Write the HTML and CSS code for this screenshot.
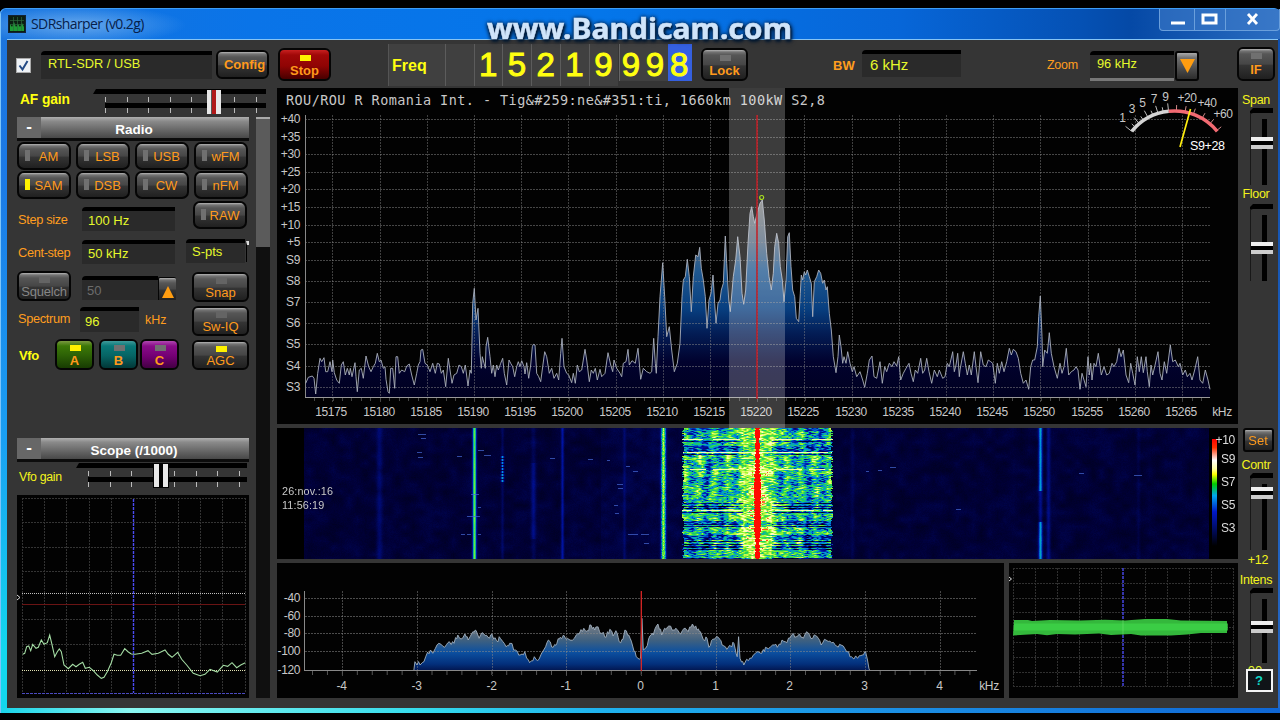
FILE: index.html
```html
<!DOCTYPE html>
<html lang="en">
<head>
    <meta charset="UTF-8">
    <meta name="viewport" content="width=device-width, initial-scale=1.0">
    <title>SDRsharper (v0.2g)</title>
    <link rel="stylesheet" href="styles.css">
</head>
<body>
<div class="window">
    <header class="titlebar">
        <svg class="app-icon" width="18" height="18" viewBox="0 0 18 18">
            <rect x="0.5" y="0.5" width="17" height="17" fill="#0b1d12" stroke="#123"/>
            <path d="M2 13V9l2 3 2-5 2 5 2-3 2 3 2-4 2 4v4H2z" fill="#1d9a35"/>
            <path d="M5.5 2v14M9.5 2v14M13.5 2v14M2 5.5h14M2 9.5h14" stroke="#2c6a3c" stroke-width="0.7"/>
        </svg>
        <span class="app-title">SDRsharper (v0.2g)</span>
        <div class="win-buttons">
            <span class="win-min"><svg width="34" height="22"><path d="M11 14h14" stroke="#fff" stroke-width="3"/></svg></span>
            <span class="win-max"><svg width="30" height="22"><rect x="8" y="6" width="13" height="8" fill="none" stroke="#fff" stroke-width="3"/></svg></span>
            <span class="win-close"><svg width="53" height="22"><path d="M22 5l9 10M31 5l-9 10" stroke="#fff" stroke-width="2.8"/></svg></span>
        </div>
        <svg class="watermark" width="330" height="44"><text x="12" y="30" textLength="305" lengthAdjust="spacingAndGlyphs">www.Bandicam.com</text></svg>
    </header>
    <div class="client">
        <!-- Toolbar -->
        <div class="toolbar">
            <span class="checkbox"><svg width="15" height="15"><path d="M3.5 7.5l3 4 5-8.500" fill="none" stroke="#234a86" stroke-width="2"/></svg></span>
            <div class="field device">RTL-SDR / USB</div>
            <button class="btn config">Config</button>
            <button class="btn led-top stop"><i class="led on"></i>Stop</button>
            <div class="freq">
                <span class="freq-label">Freq</span>
                <span class="digit"></span>
                <span class="digit">1</span>
                <span class="digit">5</span>
                <span class="digit">2</span>
                <span class="digit">1</span>
                <span class="digit">9</span>
                <span class="digit hz first">9</span>
                <span class="digit hz">9</span>
                <span class="digit hz active">8</span>
            </div>
            <button class="btn led-top lock"><i class="led"></i>Lock</button>
            <span class="bw-label">BW</span>
            <div class="field bw">6 kHz</div>
            <span class="zoom-label">Zoom</span>
            <div class="field zoom">96 kHz</div>
            <button class="btn drop"><svg width="15" height="14"><path d="M0 0h15l-7.500 14z" fill="#ff9d10"/></svg></button>
            <button class="btn led-top if"><i class="led"></i>IF</button>
        </div>
        <div class="main">
            <!-- Left side: gain + accordion panels -->
            <aside class="left">
                <div class="af-gain">
                    <span class="gain-label">AF gain</span>
                    <svg id="afSlider" width="173" height="28"></svg>
                </div>
                <div class="accordion">
                    <div class="panels">
                        <div class="panel-head"><b>-</b><span>Radio</span></div>
                        <div class="modes">
                            <button class="btn mode"><i class="led side"></i>AM</button>
                            <button class="btn mode"><i class="led side"></i>LSB</button>
                            <button class="btn mode"><i class="led side"></i>USB</button>
                            <button class="btn mode"><i class="led side"></i>wFM</button>
                            <button class="btn mode"><i class="led side on"></i>SAM</button>
                            <button class="btn mode"><i class="led side"></i>DSB</button>
                            <button class="btn mode"><i class="led side"></i>CW</button>
                            <button class="btn mode"><i class="led side"></i>nFM</button>
                        </div>
                        <div class="settings">
                            <div class="settings-left">
                                <div class="row"><label>Step size</label><div class="field step">100 Hz</div></div>
                                <div class="row cent"><label>Cent-step</label><div class="field step">50 kHz</div></div>
                                <div class="row squelch-row">
                                    <button class="btn led-top squelch"><i class="led dim"></i>Squelch</button>
                                    <div class="field squelch-val">50</div>
                                    <button class="btn up"><svg width="12" height="12"><path d="M0 12h12L6 0z" fill="#ff9d10"/></svg></button>
                                </div>
                                <div class="row spectrum-row"><label>Spectrum</label><div class="field spec-val">96</div><span class="unit">kHz</span></div>
                                <div class="row vfo-row">
                                    <label class="vfo-label">Vfo</label>
                                    <button class="btn led-top vfo vfo-a"><i class="led on"></i>A</button>
                                    <button class="btn led-top vfo vfo-b"><i class="led"></i>B</button>
                                    <button class="btn led-top vfo vfo-c"><i class="led"></i>C</button>
                                </div>
                            </div>
                            <div class="settings-right">
                                <button class="btn mode raw"><i class="led side"></i>RAW</button>
                                <div class="spts-row"><div class="field spts">S-pts</div><i class="spts-edge"></i></div>
                                <button class="btn led-top wide"><i class="led dim"></i>Snap</button>
                                <button class="btn led-top wide"><i class="led dim"></i>Sw-IQ</button>
                                <button class="btn led-top wide"><i class="led on"></i>AGC</button>
                            </div>
                        </div>
                        <div class="panel-head"><b>-</b><span>Scope (/1000)</span></div>
                        <div class="vfo-gain">
                            <span class="vfo-gain-label">Vfo gain</span>
                            <svg id="vfoSlider" width="171" height="28"></svg>
                        </div>
                        <svg id="scope" class="plot" width="232" height="203" viewBox="17 495 232 203"></svg>
                    </div>
                    <div class="scrollbar"><div class="scroll-thumb"></div></div>
                </div>
            </aside>

            <!-- Displays -->
            <section class="displays">
                <svg id="spectrum" class="plot" width="961" height="336" viewBox="277 88 961 336"></svg>
                <div class="waterfall">
                    <canvas id="waterfall" width="961" height="131"></canvas>
                    <div class="stamp">26:nov.:16<br>11:56:19</div>
                    <div class="legend"><span>+10</span><span>S9</span><span>S7</span><span>S5</span><span>S3</span></div>
                </div>
                <div class="bottom">
                    <svg id="afSpectrum" class="plot" width="727" height="135" viewBox="277 563 727 135"></svg>
                    <svg id="envelope" class="plot" width="229" height="135" viewBox="1009 563 229 135"></svg>
                </div>
            </section>

            <!-- Right side sliders -->
            <aside class="right">
                <span class="vlabel">Span</span>
                <svg class="vslider" data-thumb="29" width="24" height="77"></svg>
                <span class="vlabel">Floor</span>
                <svg class="vslider" data-thumb="38" width="24" height="77"></svg>
                <button class="btn set">Set</button>
                <span class="vlabel contr">Contr</span>
                <svg class="vslider" data-thumb="14" width="24" height="77"></svg>
                <span class="vlabel value">+12</span>
                <span class="vlabel intens">Intens</span>
                <svg class="vslider" data-thumb="33" width="24" height="75"></svg>
                <span class="clipped">00</span>
                <button class="help">?</button>
            </aside>
        </div>
    </div>
</div>
<script src="script.js"></script>
</body>
</html>
```

FILE: styles.css
```css
* {
    box-sizing: border-box;
}
body {
    margin: 0;
    width: 1280px;
    height: 720px;
    overflow: hidden;
    background: #000;
    font-family: "Liberation Sans", Arial, sans-serif;
    font-size: 13px;
    color: #ff9d1e;
}
svg, canvas {
    display: block;
}
button {
    font-family: inherit;
    margin: 0;
    padding: 0;
}
.window {
    margin-top: 8px;
    height: 705px;
    padding: 0 2px 5px 7px;
    border-top: 1px solid #3d9cf5;
    border-radius: 6px 6px 0 0;
    background:
        linear-gradient(90deg, #18d4ea 0, #8af6f0 130px, #35dcec 420px, #1fb2ee 600px, #1b8fe4 900px, #0f66d4 1280px) 0 100% / 100% 5px no-repeat,
        linear-gradient(180deg, #1c74dc 0, #1b7ae6 170px, #1a9ff2 430px, #12d6ee 640px) 0 0 / 7px 100% no-repeat,
        linear-gradient(180deg, #0f4fae, #2668c4) 100% 0 / 2px 100% no-repeat,
        #0b62d0;
    box-shadow: inset 1px 0 #7cc4fa;
}

/* Title bar */
.titlebar {
    position: relative;
    height: 30px;
    margin: 0 -2px 0 -6px;
    padding-left: 7px;
    display: flex;
    align-items: flex-start;
    background:
        radial-gradient(ellipse 110px 20px at 75px 16px, rgba(130, 185, 240, 0.75), rgba(130, 185, 240, 0) 100%),
        linear-gradient(90deg, #1673de 0, #0a74e8 250px, #0476ea 600px, #0766d8 900px, #0551b4 1080px, #0549a6 1130px, #2a6cc0 1275px);
    border-radius: 5px 5px 0 0;
}
.app-icon {
    margin-top: 6px;
}
.app-title {
    margin: 6px 0 0 5px;
    font: 14px "Open Sans", "Noto Sans", sans-serif;
    line-height: 18px;
    letter-spacing: -0.6px;
    color: #06204a;
}
.win-buttons {
    margin-left: auto;
    margin-right: 0;
    display: flex;
    height: 22px;
    border: 1px solid #6a9fdc;
    border-top: 0;
    border-radius: 0 0 4px 4px;
    background: rgba(70, 130, 205, 0.5);
}
.win-buttons span + span {
    border-left: 1px solid #6a9fdc;
}
.watermark {
    position: absolute;
    left: 474px;
    top: 0;
}
.watermark text {
    font: bold 28px "Noto Sans", "Open Sans", sans-serif;
    fill: #cfe4fa;
    stroke: #cfe4fa;
    stroke-width: 0.5px;
    filter: drop-shadow(0 0 2px #001c40) drop-shadow(1px 2px 1px #001428);
}

/* Client area */
.client {
    height: 669px;
    background: #353535;
    border-top: 1px solid #86c4f4;
}
.toolbar {
    height: 48px;
    padding-left: 9px;
    display: flex;
    align-items: flex-start;
}
.main {
    display: flex;
    height: 610px;
}
.field {
    background: #2a2a2a;
    border-top: 4px solid #000;
    border-radius: 4px 0 0 0;
    color: #e6f92c;
    font-size: 13px;
    white-space: nowrap;
    flex: none;
}
.btn {
    position: relative;
    flex: none;
    border: 2px solid #050505;
    border-radius: 6px;
    background: linear-gradient(180deg, #b5b5b5 0, #747474 2px, #565656 5px, #464646 50%, #343434 55%, #202020 100%);
    color: #ff9a1c;
    font-size: 13px;
    display: flex;
    align-items: center;
    justify-content: center;
    white-space: nowrap;
}
.led-top {
    padding-top: 11px;
}
.led {
    position: absolute;
    left: 50%;
    top: 4px;
    width: 11px;
    height: 6px;
    margin-left: -5px;
    background: #707070;
}
.led.side {
    left: 6px;
    top: 6px;
    width: 5px;
    height: 11px;
    margin-left: 0;
}
.led.dim {
    background: #646464;
}
.led.on {
    background: #fff200;
}

/* Toolbar items */
.checkbox {
    width: 15px;
    height: 15px;
    margin-top: 18px;
    background: #eef2f6;
    border: 1px solid #aaa;
}
.checkbox svg {
    margin: -1px;
}
.device {
    width: 171px;
    height: 28px;
    margin: 11px 0 0 10px;
    padding-left: 7px;
    line-height: 18px;
    font-size: 12.8px;
}
.config {
    width: 53px;
    height: 29px;
    margin: 10px 0 0 4px;
    padding-left: 4px;
    font-weight: bold;
    font-size: 13px;
}
.stop {
    width: 53px;
    height: 33px;
    margin: 8px 0 0 9px;
    font-weight: bold;
    font-size: 13px;
    background: linear-gradient(180deg, #c82020 0, #a00808 5px, #900404 55%, #480000 100%);
}
.stop .led, .lock .led {
    top: 5px;
}
.freq {
    display: flex;
    align-items: flex-start;
    width: 304px;
    height: 42px;
    margin: 4px 0 0 57px;
    border-left: 1px solid #555;
}
.freq-label {
    width: 56px;
    height: 42px;
    padding-left: 3px;
    background: #404040;
    font-size: 16px;
    font-weight: bold;
    line-height: 43px;
    color: #ffff10;
}
.digit {
    width: 28.9px;
    height: 42px;
    border-left: 1px solid #5c5c5c;
    background: #404040;
    font-size: 33px;
    line-height: 42px;
    text-align: center;
    color: #ffff10;
    -webkit-text-stroke: 1px #ffff10;
    text-indent: -1px;
}
.digit.hz {
    width: 24.500px;
    height: 37px;
    border-left: 0;
}
.digit.hz.first {
    border-left: 1px solid #666;
    margin-left: 1px;
}
.digit.active {
    background: #3560e0;
}
.lock {
    width: 47px;
    height: 33px;
    margin: 8px 0 0 9px;
    font-weight: bold;
}
.bw-label {
    margin: 18px 0 0 85px;
    font-weight: bold;
    font-size: 13px;
    width: 23px;
}
.bw {
    width: 99px;
    height: 27px;
    margin: 10px 0 0 6px;
    padding-left: 8px;
    font-size: 15px;
    line-height: 21px;
}
.zoom-label {
    width: 33px;
    margin: 18px 0 0 86px;
    font-size: 12.5px;
    letter-spacing: -0.3px;
}
.zoom {
    width: 84px;
    height: 30px;
    margin: 11px 0 0 10px;
    padding-left: 7px;
    line-height: 17px;
    font-size: 12.8px;
    border-bottom: 3px solid #777;
}
.drop {
    width: 24px;
    height: 30px;
    margin: 11px 0 0 1px;
    border-radius: 3px;
    background: linear-gradient(180deg, #aaa 0, #707070 5px, #4c4c4c 60%, #2c2c2c 100%);
}
.if {
    width: 38px;
    height: 34px;
    margin: 7px 0 0 38px;
    font-weight: bold;
}

/* Left column */
.left {
    width: 270px;
    flex: none;
    padding-left: 10px;
}
.af-gain {
    height: 29px;
    display: flex;
}
.gain-label {
    width: 76px;
    padding: 4px 0 0 3px;
    font-weight: bold;
    font-size: 13.800px;
    letter-spacing: -0.1px;
    color: #ffff10;
}
.accordion {
    display: flex;
    width: 259px;
}
.panels {
    width: 232px;
}
.panel-head {
    display: flex;
    height: 24px;
    align-items: stretch;
    background: linear-gradient(180deg, #b0b0b0 0, #8a8a8a 20%, #606060 70%, #484848 100%);
    border-bottom: 3px solid #0c0c0c;
    color: #fff;
    font-weight: bold;
    font-size: 13.500px;
}
.panel-head b {
    width: 24px;
    background: #676767;
    text-align: center;
    line-height: 20px;
    font-size: 17px;
}
.panel-head span {
    flex: 1;
    text-align: center;
    padding-right: 22px;
    line-height: 26px;
}
.modes {
    display: grid;
    grid-template-columns: repeat(4, 54px);
    column-gap: 5px;
    row-gap: 1px;
    padding-top: 1px;
}
.mode {
    height: 28px;
    padding-left: 9px;
    border-radius: 7px;
}
.settings {
    display: flex;
    justify-content: space-between;
    height: 239px;
}
.settings-left {
    width: 165px;
    padding-top: 8px;
}
.row {
    display: flex;
    height: 33px;
    align-items: flex-start;
}
.row label {
    width: 65px;
    padding: 5px 0 0 1px;
    font-size: 12.800px;
    letter-spacing: -0.35px;
}
.step {
    width: 93px;
    height: 24px;
    padding-left: 6px;
    line-height: 20px;
}
.squelch-row {
    height: 34px;
}
.squelch {
    width: 54px;
    height: 30px;
    margin-top: -2px;
    color: #868686;
    letter-spacing: -0.2px;
}
.squelch-val {
    width: 76px;
    height: 24px;
    margin: 3px 0 0 11px;
    padding-left: 5px;
    line-height: 21px;
    color: #6c6c6c;
}
.up {
    width: 18px;
    height: 23px;
    margin-top: 4px;
    border-width: 1px 0 0 1px;
    border-radius: 2px 2px 0 0;
    padding-top: 6px;
}
.spectrum-row label {
    width: 63px;
    padding-top: 4px;
}
.spec-val {
    width: 59px;
    height: 25px;
    margin-top: 0;
    padding-left: 5px;
    line-height: 21px;
}
.unit {
    margin: 6px 0 0 6px;
    font-size: 12.500px;
}
.vfo-row .vfo-label {
    width: 38px;
    padding: 8px 0 0 2px;
    font-size: 13px;
    font-weight: bold;
    color: #ffff10;
}
.vfo {
    width: 39px;
    height: 31px;
    margin-top: -1px;
    font-weight: bold;
}
.vfo-a {
    background: linear-gradient(180deg, #7a9a40 0, #3c7808 5px, #2c6006 55%, #183c02 100%);
}
.vfo-b {
    margin-left: 5px;
    background: linear-gradient(180deg, #409a9a 0, #087878 5px, #066464 55%, #023838 100%);
}
.vfo-c {
    margin-left: 2px;
    background: linear-gradient(180deg, #b048b0 0, #880c88 5px, #740074 55%, #440044 100%);
}
.settings-right {
    width: 64px;
    padding-top: 2px;
    display: flex;
    flex-direction: column;
    align-items: flex-end;
}
.raw {
    width: 54px;
    margin-right: 2px;
}
.spts-row {
    display: flex;
    width: 63px;
    margin: 10px 0 9px;
}
.spts {
    width: 59px;
    height: 24px;
    padding-left: 6px;
    line-height: 18px;
}
.spts-edge {
    width: 3px;
    height: 21px;
    margin: 2px 0 0 1px;
    border-left: 1px solid #000;
    border-top: 4px solid #ddd;
}
.wide {
    width: 57px;
    height: 30px;
    margin-bottom: 4px;
}
.vfo-gain {
    display: flex;
    height: 33px;
}
.vfo-gain-label {
    width: 59px;
    padding: 8px 0 0 2px;
    font-size: 12.300px;
    letter-spacing: -0.3px;
    color: #f4f41c;
    white-space: nowrap;
}
.scrollbar {
    width: 14px;
    height: 581px;
    margin-left: 7px;
    background: #101010;
}
.scroll-thumb {
    height: 130px;
    background: #5b5b5b;
    border-top: 2px solid #aaa;
}

/* Displays */
.displays {
    width: 961px;
    flex: none;
    display: flex;
    flex-direction: column;
    gap: 4px;
}
.plot {
    background: #020202;
}
#spectrum {
    overflow: visible;
}
.plot text {
    font-size: 12px;
    letter-spacing: -0.4px;
    fill: #c8c8c8;
}
.plot .station {
    font-family: "DejaVu Sans Mono", monospace;
    font-size: 13.500px;
    letter-spacing: 0;
}
.plot .reading {
    font-size: 12.500px;
    fill: #fff;
}
.waterfall {
    position: relative;
    height: 131px;
}
.stamp {
    position: absolute;
    left: 5px;
    top: 57px;
    font-size: 10.800px;
    line-height: 13.500px;
    letter-spacing: 0.15px;
    color: #c8c8c8;
}
.legend {
    position: absolute;
    right: 3px;
    top: 2px;
    display: flex;
    flex-direction: column;
    font-size: 12px;
    line-height: 23px;
    letter-spacing: -0.3px;
    color: #dcdcdc;
    text-align: right;
}
.legend span:first-child {
    line-height: 20px;
    height: 18px;
}
.bottom {
    display: flex;
    gap: 5px;
}

/* Right column */
.right {
    width: 40px;
    display: flex;
    flex-direction: column;
    align-items: center;
}
.vlabel {
    height: 20px;
    line-height: 24px;
    font-size: 12.500px;
    letter-spacing: -0.3px;
    margin-right: 4px;
    color: #f4f41c;
}
.vslider {
    margin-left: 7px;
    flex: none;
}
.vslider + .vlabel {
    height: 19px;
    line-height: 19px;
}
.set {
    width: 31px;
    height: 24px;
    margin-top: 147px;
    border-radius: 3px;
}
.vlabel.contr {
    height: 21px;
    line-height: 27px;
}
.vlabel.value {
    margin-right: 0;
}
.vslider + .vlabel.value {
    line-height: 21px;
}
.vlabel.intens {
    height: 19px;
    line-height: 23px;
}
.clipped {
    height: 6px;
    margin-right: 6px;
    overflow: hidden;
    line-height: 15px;
    color: #e6f92c;
}
.help {
    width: 27px;
    height: 23px;
    margin-left: 2px;
    border: 2px solid #f4f4f4;
    background: #101418;
    color: #10d8c8;
    font-size: 13px;
    font-weight: bold;
}
```

FILE: script.js
```javascript
// small seeded generator so every load draws the same picture
let seed = 4711;
function rnd() {
    seed = (seed * 1664525 + 1013904223) >>> 0;
    return seed / 4294967296;
}

function line(x1, y1, x2, y2, color, extra = '') {
    return `<line x1="${x1}" y1="${y1}" x2="${x2}" y2="${y2}" stroke="${color}" ${extra}/>`;
}
function rect(x, y, w, h, color) {
    return `<rect x="${x}" y="${y}" width="${w}" height="${h}" fill="${color}"/>`;
}
function text(x, y, str, anchor = 'middle') {
    return `<text x="${x}" y="${y}" text-anchor="${anchor}">${str}</text>`;
}
// "x,y x,y" string -> array, scaled and shifted
function pts(str, ox, oy, sx, sy) {
    return str.trim().split(/\s+/).map(p => {
        const [x, y] = p.split(',').map(Number);
        return [ox + x / sx, oy + y / sy];
    });
}
function poly(list) {
    return list.map(p => p[0].toFixed(1) + ',' + p[1].toFixed(1)).join(' ');
}

// ---- horizontal sliders ----
function hSlider(id, thumb) {
    let s = '<path d="M0 6 L3 1 H174 V6 H3z" fill="#000"/>' + rect(12, 15, 162, 5, '#000');
    for (let i = 0; i < 8; i++) {
        const x = Math.round(12 + i * 21.5) + 0.5;
        s += line(x, 9, x, 14, '#bbb') + line(x, 20, x, 25, '#bbb');
    }
    document.getElementById(id).innerHTML = s + thumb;
}
hSlider('afSlider', rect(114, 2, 14, 24, '#e8e8e8') + rect(119, 2, 4, 24, '#b01818') + rect(118, 2, 1, 24, '#555'));
hSlider('vfoSlider', rect(77, 2, 16, 24, '#000') + rect(78, 2, 5, 23, '#e8e8e8') + rect(87, 2, 5, 23, '#e8e8e8'));

// ---- vertical sliders ----
document.querySelectorAll('.vslider').forEach(el => {
    const t = Number(el.dataset.thumb);
    el.innerHTML = '<path d="M0 6V3L3 0H23V5H3z" fill="#000"/>' + line(0.5, 5, 0.5, 77, '#181818') +
        rect(12, 11, 5, 66, '#000') +
        rect(1, t, 22, 12, '#000') + rect(1, t, 22, 4, '#eee') + rect(1, t + 8, 22, 4, '#ccc');
});

// ---- RF spectrum ----
const rfA = `107,880 115,862 127,858 132,865 137,912 143,850 150,805 155,815 162,803 167,845 173,845 180,815 186,845 188,810 193,848 200,870 208,880 214,825 220,815 226,855 232,835 238,855 241,835 246,860 255,818 258,860 262,905 268,840 274,835 280,865 288,798 296,830 303,845 310,830 316,820 322,790 328,815 333,810 340,835 345,830 348,868 354,905 358,910 362,835 368,835 374,895 378,800 383,800 388,850 395,840 404,845 410,828 418,822 425,855 433,885 440,850 445,825 450,815 453,780 458,778 465,820 472,825 480,845 488,820 496,850 502,820 508,822 514,850 520,840 527,890 535,805 540,840 546,880 552,855 560,850 567,825 574,830 580,850 586,825 594,888 600,840 604,850 608,640 613,595 618,690 624,655 630,790 634,835 637,800 642,820 646,835 648,770 653,742 660,800 665,850 670,825 675,860 680,825 685,840 692,820 698,805 703,850 710,885 717,810 722,820 728,830 734,860 740,830 745,815 750,830 755,812 762,830 765,852 770,818 776,865 782,825 787,770 790,763 795,765 800,850 806,860 812,875 818,830 824,785 830,800 838,850 845,835 852,865 860,850 866,870 872,790 876,745 882,830 890,850 896,855 905,878 910,850 916,880 922,825 928,845 935,840 945,778 950,810 958,875 964,840 970,850 976,835 982,870 990,838 995,860 1005,850 1014,788 1022,825 1028,845 1032,810 1040,835`;
const rfB = `0,850 5,860 10,820 18,815 24,778 28,825 36,812 46,820 54,775 62,868 70,835 80,845 90,850 95,845 101,745 106,820 109,850 114,740 120,620 128,518 134,620 140,740 148,710 155,780 163,845 172,820 180,760 186,620 190,570 196,560 202,508 208,560 214,665 220,560 227,495 234,500 239,472 244,535 250,570 256,620 261,715 267,630 273,610 279,555 284,640 288,700 294,640 300,630 304,600 310,580 316,438 320,520 326,630 331,665 340,560 347,510 353,440 360,500 366,610 371,643 377,600 384,460 390,370 395,350 400,380 404,400 410,375 420,340 427,330 433,390 440,490 447,560 454,600 460,550 464,470 470,430 476,460 481,530 487,570 492,635 498,570 503,440 508,428 513,530 518,600 524,620 529,685 536,695 541,610 544,555 548,570 553,545 557,555 562,540 568,560 574,580 578,680 583,575 590,560 596,540 602,550 608,580 613,570 618,600 622,590 628,670 634,720 640,800 648,848 654,800 658,735 663,770 668,820 672,800 678,820 683,785 690,820 697,845 702,830 710,860 720,845 728,870 734,892 742,850 748,810 756,798 762,860 770,865 780,815 787,880 794,830 800,845 808,820 816,830 822,815 830,828 836,800 842,870 850,850 858,835 867,820 873,850 880,875 886,840 893,850 902,805 908,850 914,840 920,805 927,845 935,880 943,840 952,860 958,840 968,865 975,860 982,820 988,830 998,785 1003,845 1008,825 1013,790 1018,860`;
const rfC = `0,840 10,785 16,820 22,855 28,825 34,855 43,785 48,830 54,878 62,785 70,825 78,830 85,810 92,815 98,820 106,880 112,820 118,850 125,815 132,845 140,815 148,775 154,795 160,778 168,785 175,805 182,850 190,880 198,870 206,898 212,830 218,810 224,810 232,770 236,680 241,618 246,740 248,830 254,780 262,790 268,728 274,790 282,830 292,865 300,820 306,850 312,830 319,775 326,855 334,845 342,840 348,830 354,840 360,898 366,850 372,870 378,890 384,800 388,855 392,820 396,870 402,820 408,830 415,790 424,855 432,830 440,855 448,850 456,820 462,830 470,815 477,775 483,800 490,780 498,855 506,878 512,820 518,850 525,885 532,800 538,845 544,800 550,848 558,800 562,845 568,890 573,825 578,855 584,830 594,785 600,850 606,870 613,815 620,850 631,765 638,815 646,810 655,830 660,820 668,855 676,840 682,860 690,850 696,870 704,840 713,800 720,870 728,880 736,840 744,870 750,898`;

function drawSpectrum() {
    const trace = [...pts(rfA, 270, 90, 3, 3), ...pts(rfB, 620, 90, 3, 3), ...pts(rfC, 960, 90, 3, 3)];
    const p = poly(trace);
    let s = `<defs><linearGradient id="rf" gradientUnits="userSpaceOnUse" x1="0" y1="200" x2="0" y2="397">
        <stop offset="0" stop-color="#80807e"/><stop offset="0.2" stop-color="#5a6c80"/>
        <stop offset="0.36" stop-color="#1f5890"/><stop offset="0.55" stop-color="#083f80"/>
        <stop offset="0.68" stop-color="#031c54"/><stop offset="0.82" stop-color="#01022e"/>
        <stop offset="1" stop-color="#000020"/></linearGradient></defs>`;
    s += `<polygon points="305,397 ${p} 1210,397" fill="url(#rf)"/>`;

    const ys = [119.5, 137.5, 154.5, 172.5, 189.5, 207.5, 225.5, 242.5, 260.5, 281.5, 302.5, 323.5, 344.5, 366.5, 387.5];
    const names = ['+40', '+35', '+30', '+25', '+20', '+15', '+10', '+5', 'S9', 'S8', 'S7', 'S6', 'S5', 'S4', 'S3'];
    ys.forEach((y, i) => {
        s += line(305, y, 1210, y, '#8a8a8a', 'stroke-opacity="0.5" stroke-dasharray="2 1"');
        s += text(300, y + 3.5, names[i], 'end');
    });
    for (let i = 0; i < 19; i++) {
        const x = Math.round(332.3 + i * 47.2) + 0.5;
        s += line(x, 115, x, 403, '#8a8a8a', 'stroke-opacity="0.45" stroke-dasharray="2 1"');
        s += text(x - 1.5, 416, 15175 + i * 5);
    }
    for (let i = 0; i < 96; i++) {
        const x = Math.round(313.7 + i * 9.44) + 0.5;
        if (x < 1210) s += line(x, 398, x, 401, '#444');
    }
    s += line(305.5, 115, 305.5, 398, '#888') + line(305, 397.5, 1210, 397.5, '#999');
    s += text(1222, 416, 'kHz');
    s += `<polyline points="${p}" fill="none" stroke="#aab0bc" stroke-width="0.9"/>`;
    s += '<text class="station" x="286" y="105" textLength="539">ROU/ROU R Romania Int. - Tig&amp;#259:ne&amp;#351:ti, 1660km 100kW S2,8</text>';

    // filter passband and tuned frequency
    s += '<rect x="729" y="88" width="56" height="340" fill="#fff" fill-opacity="0.23"/>';
    s += line(757, 115, 757, 399, '#c01c24', 'stroke-width="1.5"');
    s += '<circle cx="761.7" cy="197.500" r="2" fill="none" stroke="#a8e020" stroke-width="1.2"/>';

    document.getElementById('spectrum').innerHTML = s + meter();
}

// S-meter in the top right corner
function meter() {
    const cx = 1174.5, cy = 166, r = 55;
    const at = (deg, rad) => [cx + rad * Math.sin(deg * Math.PI / 180), cy - rad * Math.cos(deg * Math.PI / 180)];
    const arc = (a, b, color) => {
        const p1 = at(a, r), p2 = at(b, r);
        return `<path d="M${p1} A${r} ${r} 0 0 1 ${p2}" fill="none" stroke="${color}" stroke-width="3.5"/>`;
    };
    let s = '';
    for (let i = 0; i < 9; i++) {
        const a = -51 + i * 5.6, o = at(a, i % 2 ? 60 : 63), n = at(a, 55);
        s += line(n[0], n[1], o[0], o[1], '#bbb');
    }
    [2, 11, 20, 30, 40, 50].forEach(a => {
        const o = at(a, 61), n = at(a, 55);
        s += line(n[0], n[1], o[0], o[1], '#c88');
    });
    s += arc(-51, -6, '#d4d4d4') + arc(-6, 51, '#f26a72');
    s += line(1190.5, 109, 1180, 147, '#ffee10', 'stroke-width="1.7"');
    [[1122.5, 122, '1'], [1132, 113, '3'], [1142.5, 107, '5'], [1154, 103, '7'], [1165.5, 101, '9'],
        [1187, 102, '+20'], [1207, 107, '+40'], [1223, 118, '+60']].forEach(l => s += text(...l));
    return s + '<text class="reading" x="1190" y="150">S9+28</text>';
}
drawSpectrum();

// ---- waterfall ----
const ramp = [[0, 0, 0, 0], [0.12, 0, 0, 56], [0.32, 0, 20, 170], [0.46, 0, 150, 220], [0.58, 30, 210, 90],
    [0.7, 150, 245, 40], [0.8, 235, 250, 110], [0.88, 255, 255, 220], [0.94, 255, 90, 30], [1, 255, 10, 0]];
function color(v) {
    v = Math.max(0, Math.min(1, v));
    for (let i = 1; i < ramp.length; i++) {
        if (v <= ramp[i][0]) {
            const a = ramp[i - 1], b = ramp[i], t = (v - a[0]) / (b[0] - a[0]);
            return [1, 2, 3].map(k => a[k] + (b[k] - a[k]) * t);
        }
    }
    return [255, 10, 0];
}
function noiseGrid(rows, cols) {
    return Array.from({length: rows}, () => Array.from({length: cols}, () => rnd()));
}
// bilinear lookup
function sample(grid, y, x) {
    const y0 = Math.floor(y), x0 = Math.floor(x), fy = y - y0, fx = x - x0;
    const a = grid[y0][x0] * (1 - fx) + grid[y0][x0 + 1] * fx;
    const b = grid[y0 + 1][x0] * (1 - fx) + grid[y0 + 1][x0 + 1] * fx;
    return a * (1 - fy) + b * fy;
}
function drawWaterfall() {
    const ctx = document.getElementById('waterfall').getContext('2d');
    const W = 961, H = 131, img = ctx.createImageData(W, H);
    const coarse = noiseGrid(24, 130);
    const blob = noiseGrid(40, 30);
    const fine = noiseGrid(132, 500);
    // [x, width, level]
    const carriers = [[379, 3, 0.09], [474, 1.9, 0.53], [502, 1.5, 0.07], [533, 2.5, 0.13], [562, 1.5, 0.18],
        [624, 1.5, 0.07], [663, 2.3, 0.6], [852, 2, 0.04], [1040, 2, 0.36], [1048, 2, 0.13], [1138, 2, 0.04]];
    for (let y = 0; y < H; y++) {
        const rowKind = rnd();
        // gaps between words are dark, clicks are thin bright lines
        const dark = rowKind < 0.09 ? 0.3 : (y > 17 && y < 24) || (y > 92 && y < 96) || (y > 106 && y < 112) ? 0.17 : 0;
        const click = rowKind > 0.93;
        const redHalf = 1.7 + rnd() * 1.3 + (y > 45 && y < 110 ? 0.9 : 0);
        for (let x = 0; x < W; x++) {
            const px = x + 277;
            let v = 0;
            if (px >= 304 && px < 1210) {
                v = 0.075 + sample(coarse, y / 7, x / 8) * 0.06 + rnd() * 0.02;
                if (px > 600 && px < 683) v += 0.02;
                for (const c of carriers) {
                    const d = Math.abs(px - c[0]) / c[1];
                    if (d < 3) {
                        let k = c[2];
                        if (c[0] === 663) k *= 0.8 + 0.3 * rnd();
                        if (c[0] === 1040 && y > 62 && y < 94) k *= 0.4;
                        if (c[0] === 502 && y > 27 && y < 55 && y % 3) k = 0.36;
                        if (c[0] === 533 && (y < 35 || y > 110)) k *= 0.5;
                        v += k * Math.exp(-d * d);
                    }
                }
                const off = Math.abs(px - 757);
                const edge = 73 + fine[y][3] * 3;
                if (off < edge) {
                    const g = sample(fine, y, x / 2.5);
                    v = 0.2 + g * 0.4 + sample(blob, y / 5, off / 6) * 0.26 - dark * (off > 14 ? 1 : 0.3);
                    v += 0.07 * Math.cos(off / 14.5 * Math.PI * 2) * (off > 12 ? 1 : 0);
                    v += 0.24 * Math.exp(-off * off / 330);
                    if (click && sample(fine, y, off / 12) > 0.42) v = 0.82 + g * 0.05;
                    v = Math.min(v, off < 12 && g > 0.86 ? 0.95 : 0.86);
                    if (off < redHalf) v = 1;
                }
            }
            const rgb = color(v), i = (y * W + x) * 4;
            img.data[i] = rgb[0];
            img.data[i + 1] = rgb[1];
            img.data[i + 2] = rgb[2];
            img.data[i + 3] = 255;
        }
    }
    ctx.putImageData(img, 0, 0);

    // short bursts of interference
    ctx.fillStyle = 'rgba(70,105,215,0.7)';
    [[418, 434, 8], [421, 438, 5], [417, 452, 5], [418, 457, 5], [457, 456, 5], [478, 450, 6], [484, 455, 7],
        [550, 458, 5], [588, 459, 5], [607, 460, 3], [626, 466, 4], [633, 471, 5], [617, 484, 6], [618, 488, 5],
        [614, 505, 4], [615, 513, 4], [461, 534, 4], [467, 534, 4], [478, 534, 3], [628, 534, 10], [641, 534, 8],
        [644, 543, 5], [471, 494, 8], [478, 507, 3], [467, 516, 13], [890, 467, 6], [956, 509, 5], [1134, 475, 8],
        [1079, 473, 5], [866, 471, 3], [878, 470, 4]].forEach(b => ctx.fillRect(b[0] - 277, b[1] - 428, b[2], 1));

    // legend strip
    ctx.fillStyle = '#000';
    ctx.fillRect(932, 0, 29, 131);
    const g = ctx.createLinearGradient(0, 11, 0, 118);
    [[0, '#f00'], [0.08, '#ff3000'], [0.2, '#fff'], [0.28, '#ffffa0'], [0.33, '#ff0'], [0.42, '#0c0'],
        [0.53, '#00a8f0'], [0.68, '#0018c8'], [1, '#000']].forEach(c => g.addColorStop(c[0], c[1]));
    ctx.fillStyle = g;
    ctx.fillRect(935, 11, 5, 107);
}
drawWaterfall();

// ---- demodulated audio spectrum ----
const af = `307,305 318,315 330,290 340,270 345,280 358,250 370,262 380,245 390,250 398,225 408,235 413,222 420,240 430,215 437,212 443,235 452,220 462,232 470,222 480,242 488,235 500,260 508,250 520,270 530,285 540,275 550,308 560,290 570,298 580,270 590,240 600,262 608,250 615,232 622,225 630,235 645,235 655,222 665,205 672,212 680,195 688,210 695,200 703,220 712,232 720,208 727,228 733,212 740,245 748,238 752,210 760,225 768,255 776,290 785,295 788,175 791,270 796,265 805,228 812,225 822,192 830,225 836,205 845,198 855,210 862,208 870,222 880,205 886,215 895,192 905,210 912,215 918,238 926,235 930,262 938,238 950,232 958,255 968,268 976,258 983,250 990,290 993,230 996,295 1004,315 1010,298 1020,295 1032,275 1042,280 1050,262 1065,255 1075,262 1085,240 1095,248 1105,225 1115,230 1122,222 1130,235 1138,215 1150,235 1158,228 1168,255 1178,240 1190,248 1200,258 1210,255 1222,275 1232,290 1245,295 1255,285 1262,275 1266,300 1269,325`;
function drawAf() {
    const base = pts(af, 270, 560, 2.119, 3), trace = [[413.9, 670]];
    base.forEach((p, i) => {
        trace.push(p);
        const n = base[i + 1];
        if (n && n[0] - p[0] > 3) {
            trace.push([p[0] + (n[0] - p[0]) * 0.4, p[1] + (n[1] - p[1]) * 0.4 + (rnd() - 0.5) * 5]);
            trace.push([p[0] + (n[0] - p[0]) * 0.7, p[1] + (n[1] - p[1]) * 0.7 + (rnd() - 0.5) * 5]);
        }
    });
    trace.push([869.5, 670]);
    const p = poly(trace);
    let s = `<defs><linearGradient id="afg" gradientUnits="userSpaceOnUse" x1="0" y1="624" x2="0" y2="671">
        <stop offset="0" stop-color="#7c7f84"/><stop offset="0.35" stop-color="#3e6080"/>
        <stop offset="0.6" stop-color="#0c50a0"/><stop offset="0.85" stop-color="#03307c"/>
        <stop offset="1" stop-color="#02144c"/></linearGradient></defs>`;
    s += `<polygon points="${p}" fill="url(#afg)"/>`;
    [598.5, 616.5, 633.5, 651.5].forEach((y, i) => {
        s += line(305, y, 977, y, '#8a8a8a', 'stroke-opacity="0.55" stroke-dasharray="2 1"');
        s += text(300, y + 3.5, -40 - i * 20, 'end');
    });
    s += text(300, 673.5, '-120', 'end');
    for (let i = -4; i <= 4; i++) {
        const x = Math.round(641 + i * 74.7) + 0.5;
        s += line(x, 591, x, 676, '#8a8a8a', 'stroke-opacity="0.5" stroke-dasharray="2 1"');
        s += text(x - 1, 690, i);
    }
    for (let x = 312.500; x < 977; x += 14.94) s += line(x, 671, x, 675, '#555');
    s += line(304.5, 591, 304.5, 671, '#888') + line(304, 670.5, 977, 670.5, '#888');
    s += `<polyline points="${p}" fill="none" stroke="#a0b0c0" stroke-width="0.9"/>`;
    s += line(641.3, 591, 641.3, 671, '#d82424', 'stroke-width="1.3"');
    s += text(989, 690, 'kHz');
    document.getElementById('afSpectrum').innerHTML = s;
}
drawAf();

// ---- scope ----
const scopeTrace = `68,673 74,670 80,650 86,648 92,662 98,643 108,655 115,652 124,630 132,643 142,638 149,615 155,640 164,680 172,665 178,657 184,665 192,705 205,716 218,703 228,710 238,703 248,697 256,715 268,712 280,722 292,735 304,745 312,742 322,725 334,698 342,673 352,676 362,676 374,656 384,665 394,672 405,673 425,670 444,662 456,673 475,670 495,660 505,673 516,682 533,667 545,688 560,705 580,730 600,737 615,733 630,718 652,726 670,706 683,709 696,698 710,713 722,705 736,698`;
function drawScope() {
    let s = '';
    [22.5, 44.5, 66.5, 89.5, 111.5, 155.5, 178.5, 200.5, 222.5, 245.5].forEach(x => s += line(x, 498, x, 693, '#323232', 'stroke-dasharray="2 1"'));
    [498.5, 522.5, 547.5, 571.5, 619.5, 644.5].forEach(y => s += line(22, y, 245, y, '#343434', 'stroke-dasharray="2 1"'));
    s += line(22, 593.5, 245, 593.5, '#c0c0c0', 'stroke-dasharray="1 1"');
    s += line(22, 604.5, 245, 604.5, '#6a1414', 'stroke-width="1"');
    s += line(22, 670.5, 245, 670.5, '#e0e0b0', 'stroke-dasharray="1 1"');
    s += line(133.5, 499, 133.5, 693, '#4a4af0', 'stroke-width="1.4" stroke-dasharray="3 1"');
    s += line(22, 693.5, 245, 693.5, '#4a4ac0', 'stroke-dasharray="3 1"');
    s += '<path d="M17 595l3 2.500-3 2.500" fill="none" stroke="#ddd"/>';
    s += `<polyline points="${poly(pts(scopeTrace, 0, 430, 3, 3))}" fill="none" stroke="#a4dca4" stroke-width="1.1"/>`;
    document.getElementById('scope').innerHTML = s;
}
drawScope();

// ---- envelope ----
function drawEnvelope() {
    let s = '';
    for (let i = 0; i <= 10; i++) {
        if (i === 5) continue;
        const x = Math.round(1013 + i * 22) + 0.5;
        s += line(x, 568, x, 687, '#303030', 'stroke-dasharray="2 1"');
    }
    for (let i = 0; i <= 8; i++) {
        const y = Math.round(568 + i * 14.8) + 0.5;
        s += line(1013, y, 1234, y, '#303030', 'stroke-dasharray="2 1"');
    }
    s += '<path d="M1014 620l14 0 4 1 18-1 30 .5 25-.8 20 .8 20-1.500h22l14 1.500 46 .500v12l-26 0-14 1.500-16 1h-30l-10-1.500-20 1-12-1.500-24 1-18-.5-10 1.200-10-1.200-24 1.500z" fill="#34b83c"/>';
    s += '<path d="M1014 627h214" stroke="#3fd648" stroke-width="7" stroke-opacity="0.7"/>';
    s += line(1123, 568, 1123, 620, '#4a4af0', 'stroke-width="1.4" stroke-dasharray="3 1"');
    s += line(1123, 635, 1123, 687, '#4a4af0', 'stroke-width="1.4" stroke-dasharray="3 1"');
    s += line(1123, 620, 1123, 635, '#6ae070', 'stroke-opacity="0.6"');
    s += '<path d="M1009 577l2.500 2-2.500 2" fill="none" stroke="#ddd"/>';
    document.getElementById('envelope').innerHTML = s;
}
drawEnvelope();
```
